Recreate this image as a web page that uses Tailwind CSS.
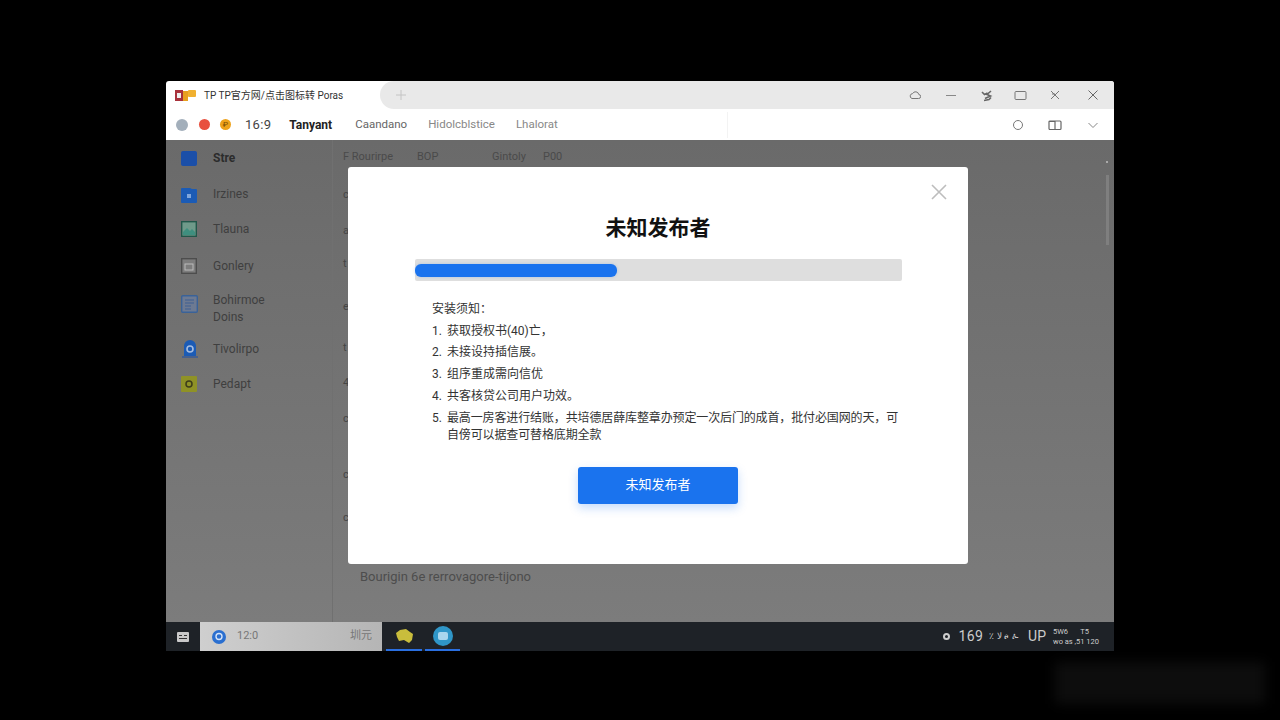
<!DOCTYPE html>
<html lang="zh-CN">
<head>
    <meta charset="UTF-8">
    <title>未知发布者</title>
    <script src="https://cdn.jsdelivr.net/npm/@tailwindcss/browser@4"></script>
</head>
<body class="bg-black w-[1280px] h-[720px] overflow-hidden font-['Roboto','Noto_Sans_CJK_SC',sans-serif]">
    <!-- window -->
    <div class="relative ml-[166px] mt-[81px] w-[948px] h-[570px] flex flex-col rounded-t-[3px] overflow-hidden">
        <!-- title bar -->
        <div class="h-[28px] flex bg-white shrink-0">
            <div class="w-[214px] flex items-center pl-[9px] shrink-0">
                <svg width="21" height="11" viewBox="0 0 21 11"><rect width="8" height="11" fill="#a8323c"/><rect x="2" y="3" width="4" height="5" fill="#eee"/><rect x="8" y="1" width="5" height="10" fill="#e8a020"/><rect x="13" width="8" height="7" rx="1" fill="#f0b030"/></svg>
                <span class="ml-[8px] text-[10px] text-[#333] whitespace-nowrap">TP TP官方网/点击图标转 Poras</span>
            </div>
            <div class="flex-1 bg-[#e9e9e9] rounded-l-[14px] flex items-center text-[#777]">
                <svg class="ml-[16px]" width="10" height="10" viewBox="0 0 10 10" fill="none" stroke="#c4c4c4"><path d="M5 0v10M0 5h10"/></svg>
                <div class="ml-auto flex items-center">
                    <svg class="w-[12px] h-[12px]" viewBox="0 0 12 12" fill="none" stroke="#777"><path d="M3 9.500h6.500a2 2 0 0 0 .3-4A3.300 3.300 0 0 0 3.600 4.600 2.500 2.500 0 0 0 3 9.500z"/></svg>
                    <svg class="ml-[24px] w-[12px] h-[12px]" viewBox="0 0 12 12" fill="none" stroke="#888"><path d="M1 6.500h10"/></svg>
                    <svg class="ml-[23px] w-[13px] h-[13px]" viewBox="0 0 13 13" fill="none" stroke="#666" stroke-width="1.600"><path d="M2 3l2.500 2.500 3-1.500M11 2L7 5.500l3.500 1.500L5 9.500M4 11.500l5-1 2-2"/></svg>
                    <svg class="ml-[21px] w-[13px] h-[11px]" viewBox="0 0 13 11" fill="none" stroke="#777"><rect x="1" y="1.500" width="11" height="8" rx="1"/></svg>
                    <svg class="ml-[22px] w-[12px] h-[12px]" viewBox="0 0 12 12" fill="none" stroke="#777"><path d="M2 2l8 8M10 2L2 10M3 5h3"/></svg>
                    <svg class="ml-[26px] mr-[15px] w-[12px] h-[12px]" viewBox="0 0 12 12" fill="none" stroke="#666"><path d="M1.500 1.500l9 9M10.500 1.500l-9 9"/></svg>
                </div>
            </div>
        </div>
        <!-- toolbar -->
        <div class="h-[31px] flex items-center bg-white shrink-0 pl-[10px]">
            <span class="w-[12px] h-[12px] rounded-full bg-[#a3afbb]"></span>
            <span class="ml-[11px] w-[11px] h-[11px] rounded-full bg-[#e8503f]"></span>
            <span class="ml-[10px] w-[11px] h-[11px] rounded-full bg-[#eea21b] text-[8px] leading-[11px] text-center text-[#7a4a00]">₽</span>
            <span class="ml-[14px] text-[13px] text-[#444] tracking-[0.3px]">16:9</span>
            <div class="ml-[18px] w-[439px] h-[26px] flex items-center text-[11.500px] border-r border-[#f3f3f3]">
                <span class="font-bold text-[12px] text-[#222]">Tanyant</span>
                <span class="ml-[23px] text-[#666]">Caandano</span>
                <span class="ml-[21px] text-[#888]">Hidolcblstice</span>
                <span class="ml-[21px] text-[#888]">Lhalorat</span>
            </div>
            <div class="ml-auto flex items-center">
                <svg class="w-[12px] h-[12px]" viewBox="0 0 12 12" fill="none" stroke="#777"><circle cx="6" cy="6" r="4.500"/></svg>
                <svg class="ml-[24px] w-[14px] h-[12px]" viewBox="0 0 14 12" fill="none" stroke="#666" stroke-width="1.200"><rect x="1" y="2" width="12" height="8.500" rx="1"/><path d="M7 2v8.500M1 2.500h6"/></svg>
                <svg class="ml-[25px] mr-[15px] w-[12px] h-[12px]" viewBox="0 0 12 12" fill="none" stroke="#888"><path d="M1.500 4l4.500 4.500L10.500 4"/></svg>
            </div>
        </div>
        <!-- content -->
        <div class="flex-1 flex bg-linear-to-b from-[#6a6a6a] to-[#7c7c7c] min-h-0">
            <div class="w-[167px] shrink-0 border-r border-[#707070] pl-[15px] text-[12px] text-[#3f3f3f]">
                <div class="h-[18px] mt-[9px] flex items-center">
                    <span class="w-[16px] h-[15px] rounded-[2px] bg-[#1b4fa8]"></span>
                    <span class="ml-[16px] font-bold text-[#2c2c2c]">Stre</span>
                </div>
                <div class="h-[18px] mt-[18px] flex items-center">
                    <svg width="16" height="17" viewBox="0 0 16 17"><path d="M0 3a1 1 0 0 1 1-1h8l2 1h4a1 1 0 0 1 1 1v12a1 1 0 0 1-1 1H1a1 1 0 0 1-1-1z" fill="#1b5bb5"/><rect x="6" y="8" width="4" height="4" fill="#7fa6dc"/></svg>
                    <span class="ml-[16px]">Irzines</span>
                </div>
                <div class="h-[18px] mt-[17px] flex items-center">
                    <svg width="16" height="16" viewBox="0 0 16 16"><rect x="0.700" y="0.700" width="14.600" height="14.600" fill="#6f9a8a" stroke="#21574a" stroke-width="1.400"/><path d="M2 11l4-4 3 3 2-2 3 3v3H2z" fill="#3f8f7f"/></svg>
                    <span class="ml-[16px]">Tlauna</span>
                </div>
                <div class="h-[18px] mt-[19px] flex items-center">
                    <svg width="16" height="16" viewBox="0 0 16 16"><rect x="0.700" y="0.700" width="14.600" height="14.600" fill="#7d7d7d" stroke="#4d4d4d" stroke-width="1.400"/><rect x="4" y="6" width="8" height="6" fill="none" stroke="#bbb"/></svg>
                    <span class="ml-[16px]">Gonlery</span>
                </div>
                <div class="mt-[17px] flex items-start">
                    <svg class="mt-[3px]" width="17" height="18" viewBox="0 0 17 18"><rect x="0.700" y="0.700" width="15.600" height="16.600" rx="1" fill="#6d7a92" stroke="#3a6298" stroke-width="1.400"/><path d="M4 5h9M4 8h9M4 11h6M4 14h6" stroke="#3f5f92"/></svg>
                    <span class="ml-[15px] leading-[17px]">Bohirmoe<br>Doins</span>
                </div>
                <div class="h-[18px] mt-[14px] flex items-center">
                    <svg width="18" height="18" viewBox="0 0 18 18"><path d="M3 16V6a6 6 0 0 1 12 0v10z" fill="#1b5bb5"/><path d="M1 17h16" stroke="#1b4fa8"/><circle cx="9" cy="9" r="3" fill="none" stroke="#a6bde0" stroke-width="1.600"/></svg>
                    <span class="ml-[14px]">Tivolirpo</span>
                </div>
                <div class="h-[18px] mt-[17px] flex items-center">
                    <svg width="16" height="16" viewBox="0 0 16 16"><rect width="16" height="16" rx="1" fill="#8f9226"/><circle cx="8" cy="8" r="3" fill="none" stroke="#3d3d1a" stroke-width="1.500"/></svg>
                    <span class="ml-[16px]">Pedapt</span>
                </div>
            </div>
            <div class="flex-1 flex min-w-0">
                <div class="flex-1 pl-[10px] text-[11px] text-[#454545] min-w-0">
                    <div class="h-[16px] mt-[9px] flex items-center text-[#4a4a4a]">
                        <span class="w-[74px]">F Rourirpe</span>
                        <span class="w-[75px]">BOP</span>
                        <span class="w-[51px]">Gintoly</span>
                        <span>P00</span>
                    </div>
                    <p class="mt-[23px] leading-[14px]">c</p>
                    <p class="mt-[22px] leading-[14px]">a</p>
                    <p class="mt-[19px] leading-[14px]">t</p>
                    <p class="mt-[29px] leading-[14px]">e</p>
                    <p class="mt-[27px] leading-[14px]">t</p>
                    <p class="mt-[21px] leading-[14px]">4</p>
                    <p class="mt-[22px] leading-[14px]">c</p>
                    <p class="mt-[42px] leading-[14px]">c</p>
                    <p class="mt-[29px] leading-[14px]">c</p>
                    <p class="mt-[45px] ml-[17px] leading-[14px] text-[13px] text-[#4d4d4d] whitespace-nowrap">Bourigin 6e rerrovagore-tijono</p>
                </div>
                <div class="w-[14px] shrink-0 flex flex-col items-center pt-[21px]">
                    <span class="w-[2px] h-[2px] bg-[#aaa]"></span>
                    <span class="mt-[12px] w-[3px] h-[70px] bg-[#7f7f7f]"></span>
                </div>
            </div>
        </div>
        <!-- taskbar -->
        <div class="h-[29px] flex items-stretch bg-[#1e2227] shrink-0">
            <div class="w-[34px] flex items-center justify-center">
                <svg width="12" height="10" viewBox="0 0 12 10"><rect width="12" height="10" rx="1" fill="#c9c9c9"/><path d="M2 3.500h3M7 3.500h3M2 6.500h8" stroke="#333"/></svg>
            </div>
            <div class="w-[182px] bg-linear-to-r from-[#cfcfcf] to-[#b5b5b5] flex items-center pl-[12px] pr-[10px] text-[11px] text-[#777]">
                <svg width="14" height="14" viewBox="0 0 14 14"><circle cx="7" cy="7" r="7" fill="#2a6fd0"/><circle cx="7" cy="6.500" r="3" fill="none" stroke="#d5e3f7" stroke-width="1.400"/></svg>
                <span class="ml-[11px]">12:0</span>
                <span class="ml-auto">圳元</span>
            </div>
            <div class="ml-[4px] w-[36px] flex items-center justify-center border-b-2 border-[#2a6fe0]">
                <svg width="19" height="16" viewBox="0 0 19 16"><path d="M1 5l4-3 6-1 4 3 3 2-1 6-3 3-5-3-5 1-2-4z" fill="#c9bd3c"/></svg>
            </div>
            <div class="ml-[3px] w-[35px] flex items-center justify-center border-b-2 border-[#2a6fe0]">
                <span class="w-[20px] h-[20px] rounded-full bg-[#2f96c8] flex items-center justify-center"><span class="w-[10px] h-[8px] rounded-[2px] bg-[#a9d6ee]"></span></span>
            </div>
            <div class="ml-auto flex items-center pr-[16px] text-[#ccc]">
                <span class="w-[7px] h-[7px] rounded-full border-2 border-[#ccc]"></span>
                <span class="ml-[9px] text-[14px] tracking-[0.4px]">169</span>
                <span class="ml-[6px] text-[9px] tracking-[1px] whitespace-nowrap">٪ ﻻ ፀ ፁ</span>
                <span class="ml-[9px] text-[14px]">UP</span>
                <div class="ml-[7px] text-[7.500px] leading-[10px] w-[45px]">
                    <div class="flex justify-between pr-[9px]"><span>5W6</span><span>T5</span></div>
                    <div class="whitespace-nowrap">wo as ,51 120</div>
                </div>
            </div>
        </div>
        <!-- modal -->
        <div class="absolute left-[182px] top-[86px] w-[620px] h-[397px] bg-white rounded-[3px] px-[67px] pt-[46px]">
            <svg class="absolute right-[21px] top-[17px] w-[16px] h-[16px]" viewBox="0 0 16 16" fill="none" stroke="#bdbdbd" stroke-width="1.600"><path d="M1 1l14 14M15 1L1 15"/></svg>
            <h1 class="text-center text-[21px] font-bold text-[#111] leading-[30px]">未知发布者</h1>
            <div class="mt-[16px] w-[487px] h-[22px] bg-[#dedede] rounded-[2px] flex items-center">
                <div class="w-[202px] h-[13px] bg-[#1a73ee] rounded-[6px] shadow-[0_0_3px_rgba(26,115,238,0.25)]"></div>
            </div>
            <div class="mt-[18px] pl-[17px] text-[12px] text-[#333] leading-[21.700px]">
                <p>安装须知&#65306;</p>
                <ol>
                    <li class="flex"><span class="w-[15px] shrink-0">1.</span><span>获取授权书(40)亡&#65292;</span></li>
                    <li class="flex"><span class="w-[15px] shrink-0">2.</span><span>未接设持插信展&#12290;</span></li>
                    <li class="flex"><span class="w-[15px] shrink-0">3.</span><span>组序重成需向信优</span></li>
                    <li class="flex"><span class="w-[15px] shrink-0">4.</span><span>共客核贷公司用户功效&#12290;</span></li>
                    <li class="flex"><span class="w-[15px] shrink-0">5.</span><span class="leading-[17px] pt-[2px] whitespace-nowrap tracking-[-0.130px]">最高一房客进行结账&#65292;共培德居薛库整章办预定一次后门的成首&#65292;批付必国网的天&#65292;可<br>自傍可以据查可替格底期全款</span></li>
                </ol>
            </div>
            <button class="block mx-auto mt-[23px] w-[160px] h-[37px] bg-[#1a73ee] rounded-[3px] text-white text-[13px] shadow-[0_4px_10px_rgba(26,115,238,0.25)]">未知发布者</button>
        </div>
    </div>
    <!-- blurred mark under the window -->
    <div class="absolute left-[1055px] top-[662px] w-[210px] h-[42px] bg-white/5 blur-[6px]"></div>
</body>
</html>
